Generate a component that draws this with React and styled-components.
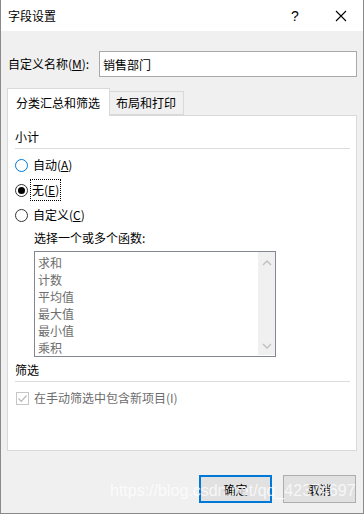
import styled, { createGlobalStyle } from 'styled-components';

const GlobalStyle = createGlobalStyle`
  html, body {
    margin: 0;
    padding: 0;
    background: #f0f0f0;
  }
  * {
    box-sizing: border-box;
  }
`;

const font = `"Noto Sans CJK SC", "Microsoft YaHei", sans-serif`;

function App() {
  const functions = ["求和", "计数", "平均值", "最大值", "最小值", "乘积"];

  return (
    <>
      <GlobalStyle />
      <Dialog>
        <TitleBar>
          <Title>字段设置</Title>
          <HelpButton>?</HelpButton>
          <CloseButton>
            <svg width="12" height="12" viewBox="0 0 12 12">
              <path d="M1 1 L11 11 M11 1 L1 11" stroke="#000" strokeWidth="1.1" fill="none" />
            </svg>
          </CloseButton>
        </TitleBar>

        <Body>
          <NameRow>
            <Label>
              自定义名称(<u>M</u>):
            </Label>
            <NameInput readOnly value="销售部门" />
          </NameRow>

          <TabStrip>
            <Tab $active>分类汇总和筛选</Tab>
            <Tab>布局和打印</Tab>
          </TabStrip>

          <Panel>
            <SectionTitle>小计</SectionTitle>
            <Separator />

            <RadioRow $top={4}>
              <Radio $focused />
              <OptionText>
                自动(<u>A</u>)
              </OptionText>
            </RadioRow>
            <RadioRow $top={1}>
              <Radio $checked />
              <FocusText>
                无(<u>E</u>)
              </FocusText>
            </RadioRow>
            <RadioRow $top={1}>
              <Radio />
              <OptionText>
                自定义(<u>C</u>)
              </OptionText>
            </RadioRow>

            <Indented>
              <ListCaption>选择一个或多个函数:</ListCaption>
              <ListBox>
                <ListItems>
                  {functions.map((f) => (
                    <ListItem key={f}>{f}</ListItem>
                  ))}
                </ListItems>
                <ScrollBar>
                  <svg width="10" height="6" viewBox="0 0 10 6">
                    <path d="M1 5 L5 1 L9 5" stroke="#c2c2c2" strokeWidth="1.5" fill="none" />
                  </svg>
                  <svg width="10" height="6" viewBox="0 0 10 6">
                    <path d="M1 1 L5 5 L9 1" stroke="#c2c2c2" strokeWidth="1.5" fill="none" />
                  </svg>
                </ScrollBar>
              </ListBox>
            </Indented>

            <SectionTitle $top={5}>筛选</SectionTitle>
            <Separator />

            <CheckRow>
              <CheckBox>
                <svg width="11" height="11" viewBox="0 0 11 11">
                  <path d="M1.5 5.5 L4.3 8.3 L9.5 2.5" stroke="#b8b8b8" strokeWidth="1.2" fill="none" />
                </svg>
              </CheckBox>
              <DisabledText>在手动筛选中包含新项目(I)</DisabledText>
            </CheckRow>
          </Panel>

          <ButtonBar>
            <DialogButton $primary>确定</DialogButton>
            <DialogButton>取消</DialogButton>
          </ButtonBar>
        </Body>

        <Watermark>https://blog.csdn.net/qq_42374697</Watermark>
      </Dialog>
    </>
  );
}

const Dialog = styled.div`
  position: relative;
  width: 364px;
  height: 514px;
  display: flex;
  flex-direction: column;
  background: #f0f0f0;
  border-left: 1px solid #8a8a8a;
  border-right: 1px solid #8a8a8a;
  border-bottom: 1px solid #8a8a8a;
  font-family: ${font};
  font-size: 12px;
  color: #000;
  overflow: hidden;
`;

const TitleBar = styled.div`
  height: 31px;
  flex-shrink: 0;
  background: #fff;
  display: flex;
  align-items: center;
  padding-left: 7px;
`;

const Title = styled.div`
  flex: 1;
  font-size: 12px;
  line-height: 16px;
`;

const HelpButton = styled.div`
  width: 14px;
  margin-right: 33px;
  font-family: "Liberation Sans", Arial, sans-serif;
  font-size: 14px;
  text-align: center;
`;

const CloseButton = styled.div`
  width: 12px;
  height: 12px;
  margin-right: 16px;
  display: flex;
`;

const Body = styled.div`
  flex: 1;
  display: flex;
  flex-direction: column;
  padding: 20px 6px 0 6px;
`;

const NameRow = styled.div`
  display: flex;
  align-items: center;
  height: 26px;
`;

const Label = styled.div`
  width: 92px;
  padding-left: 1px;
  line-height: 16px;
  u {
    text-decoration-thickness: 1px;
  }
`;

const NameInput = styled.input`
  width: 258px;
  height: 26px;
  border: 1px solid #a9a9a9;
  background: #fff;
  font-family: ${font};
  font-size: 12px;
  padding: 0 3px;
  outline: none;
  color: #000;
`;

const TabStrip = styled.div`
  display: flex;
  align-items: flex-end;
  margin-top: 11px;
  height: 27px;
  position: relative;
  z-index: 1;
`;

const Tab = styled.div`
  height: ${(p) => (p.$active ? '28px' : '24px')};
  padding: 0 ${(p) => (p.$active ? '8px' : '6px')};
  display: flex;
  align-items: center;
  background: ${(p) => (p.$active ? '#fff' : '#f0f0f0')};
  border: 1px solid #d9d9d9;
  border-bottom: ${(p) => (p.$active ? 'none' : '1px solid #d9d9d9')};
  border-left: ${(p) => (p.$active ? '1px solid #d9d9d9' : 'none')};
  margin-bottom: ${(p) => (p.$active ? '-1px' : '0')};
  line-height: 16px;
  width: ${(p) => (p.$active ? '103px' : '74px')};
`;

const Panel = styled.div`
  height: 336px;
  background: #fff;
  border: 1px solid #d9d9d9;
  padding: 0 6px 0 7px;
  display: flex;
  flex-direction: column;
`;

const SectionTitle = styled.div`
  margin-top: ${(p) => p.$top ?? 13}px;
  line-height: 16px;
  height: 16px;
`;

const Separator = styled.div`
  height: 1px;
  background: #dcdcdc;
  margin-top: 3px;
`;

const RadioRow = styled.div`
  display: flex;
  align-items: center;
  height: 24px;
  margin-top: ${(p) => p.$top}px;
`;

const Radio = styled.span`
  width: 13px;
  height: 13px;
  border-radius: 50%;
  border: 1px solid ${(p) => (p.$focused ? '#0078d7' : '#333')};
  background: #fff;
  display: flex;
  align-items: center;
  justify-content: center;
  margin-right: 5px;
  &::after {
    content: '';
    display: ${(p) => (p.$checked ? 'block' : 'none')};
    width: 7px;
    height: 7px;
    border-radius: 50%;
    background: #000;
  }
`;

const OptionText = styled.span`
  line-height: 16px;
  u {
    text-decoration-thickness: 1px;
  }
`;

const FocusText = styled(OptionText)`
  outline: 1px dotted #000;
  padding: 2px 1px;
  margin-left: -2px;
`;

const Indented = styled.div`
  padding-left: 19px;
  display: flex;
  flex-direction: column;
`;

const ListCaption = styled.div`
  margin-top: 3px;
  line-height: 16px;
`;

const ListBox = styled.div`
  margin-top: 5px;
  width: 242px;
  height: 106px;
  border: 1px solid #828790;
  display: flex;
  background: #fff;
`;

const ListItems = styled.div`
  flex: 1;
  padding: 2px 3px;
`;

const ListItem = styled.div`
  height: 17px;
  line-height: 17px;
  color: #6d6d6d;
`;

const ScrollBar = styled.div`
  width: 17px;
  margin: 0 0 1px 0;
  background: #f0f0f0;
  display: flex;
  flex-direction: column;
  justify-content: space-between;
  align-items: center;
  padding: 8px 0 6px;
`;

const CheckRow = styled.div`
  display: flex;
  align-items: center;
  margin-top: 8px;
  height: 16px;
`;

const CheckBox = styled.span`
  width: 13px;
  height: 13px;
  border: 1px solid #c6c6c6;
  display: flex;
  align-items: center;
  justify-content: center;
  margin: 0 5px 0 1px;
`;

const DisabledText = styled.span`
  color: #6d6d6d;
  line-height: 16px;
`;

const ButtonBar = styled.div`
  display: flex;
  justify-content: flex-end;
  gap: 11px;
  margin-top: 24px;
  padding-right: 1px;
`;

const DialogButton = styled.button`
  width: 73px;
  height: 28px;
  background: #e1e1e1;
  border: ${(p) => (p.$primary ? '2px solid #0078d7' : '1px solid #adadad')};
  font-family: ${font};
  font-size: 12px;
  color: #000;
  padding: 0;
`;

const Watermark = styled.div`
  position: absolute;
  left: 109px;
  top: 482px;
  font-family: "Liberation Sans", Arial, sans-serif;
  font-size: 16px;
  color: rgba(255, 255, 255, 0.75);
  white-space: nowrap;
  pointer-events: none;
`;

export default App;
